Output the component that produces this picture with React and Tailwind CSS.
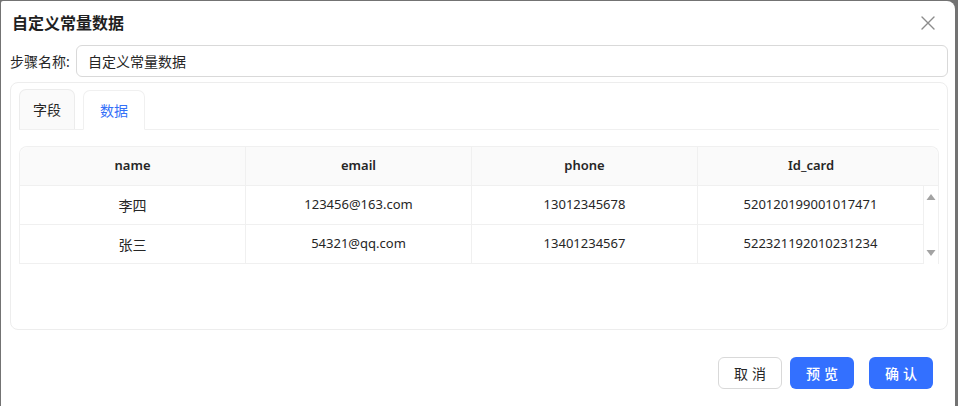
import React from "react";

const font = { fontFamily: '"Noto Sans", "Noto Sans CJK SC", sans-serif' };

const cols = ["name", "email", "phone", "Id_card"];
const rows = [
  ["李四", "123456@163.com", "13012345678", "520120199001017471"],
  ["张三", "54321@qq.com", "13401234567", "522321192010231234"],
];

export default function App() {
  return (
    <div className="w-[958px] h-[406px] overflow-hidden bg-[#737373]" style={font}>
      <div className="ml-[1px] mt-[1px] w-[954px] h-[420px] bg-white rounded-tr-[8px] rounded-tl-[2px] flex flex-col">
        {/* header */}
        <div className="h-[44px] flex items-center justify-between pl-[11px] pr-[20px]">
          <div className="text-[16px] font-bold text-[#1f1f1f] leading-none">自定义常量数据</div>
          <svg width="14" height="14" viewBox="0 0 14 14" className="text-[#8c8c8c]">
            <path d="M1 1L13 13M13 1L1 13" stroke="currentColor" strokeWidth="1.4" strokeLinecap="round" />
          </svg>
        </div>
        {/* step name */}
        <div className="flex items-center pl-[9px] pr-[7px]">
          <div className="w-[66px] text-[14px] text-[#262626] whitespace-nowrap">步骤名称:</div>
          <div className="flex-1 h-[32px] border border-[#d9d9d9] rounded-[6px] flex items-center px-[11px] text-[14px] text-[#262626]">
            自定义常量数据
          </div>
        </div>
        {/* card */}
        <div className="mt-[5px] ml-[9px] mr-[7px] h-[248px] border border-[#ededed] rounded-[8px] px-[8px] pt-[7px]">
          <div className="flex items-end gap-[8px] border-b border-[#f0f0f0] h-[40px]">
            <div className="w-[56px] h-[40px] bg-[#fafafa] border border-[#ececec] border-b-0 rounded-t-[7px] flex items-center justify-center text-[14px] text-[#262626]">
              字段
            </div>
            <div className="w-[62px] h-[40px] bg-white border border-[#f0f0f0] border-b-white rounded-t-[7px] flex items-center justify-center text-[14px] text-[#3470f8] -mb-[1px]">
              数据
            </div>
          </div>
          {/* table */}
          <div className="mt-[16px] border border-[#f0f0f0] rounded-t-[8px] border-b-0">
            <div className="flex h-[39px] bg-[#fafafa] rounded-t-[8px] border-b border-[#f0f0f0]">
              {cols.map((c, i) => (
                <div
                  key={c}
                  className={`w-[226px] flex items-center justify-center text-[13px] font-semibold text-[#262626] ${i < 3 ? "border-r border-[#f0f0f0]" : ""}`}
                >
                  {c}
                </div>
              ))}
              <div className="flex-1" />
            </div>
            <div className="flex">
              <div className="flex flex-col">
                {rows.map((r, ri) => (
                  <div key={ri} className="flex h-[39px] border-b border-[#f0f0f0]">
                    {r.map((v, i) => (
                      <div
                        key={i}
                        className={`w-[226px] flex items-center justify-center text-[#262626] border-r border-[#f0f0f0] ${i === 0 ? "text-[14px]" : "text-[13px]"}`}
                      >
                        {v}
                      </div>
                    ))}
                  </div>
                ))}
              </div>
              <div className="flex-1 flex flex-col items-center justify-between py-[7px] bg-white">
                <svg width="10" height="8" viewBox="0 0 10 8">
                  <path d="M5 1L9.5 7H0.5Z" fill="#a3a3a3" />
                </svg>
                <svg width="10" height="8" viewBox="0 0 10 8">
                  <path d="M5 7L9.5 1H0.5Z" fill="#a3a3a3" />
                </svg>
              </div>
            </div>
          </div>
        </div>
        {/* footer */}
        <div className="flex justify-end items-center pr-[22px] mt-[27px]">
          <div className="w-[64px] h-[32px] border border-[#d9d9d9] rounded-[6px] flex items-center justify-center text-[14px] text-[#262626] tracking-[4px] pl-[4px]">
            取消
          </div>
          <div className="ml-[8px] w-[64px] h-[32px] bg-[#3370ff] rounded-[6px] flex items-center justify-center text-[14px] font-medium text-white tracking-[4px] pl-[4px]">
            预览
          </div>
          <div className="ml-[15px] w-[64px] h-[32px] bg-[#3370ff] rounded-[6px] flex items-center justify-center text-[14px] font-medium text-white tracking-[4px] pl-[4px]">
            确认
          </div>
        </div>
      </div>
    </div>
  );
}
